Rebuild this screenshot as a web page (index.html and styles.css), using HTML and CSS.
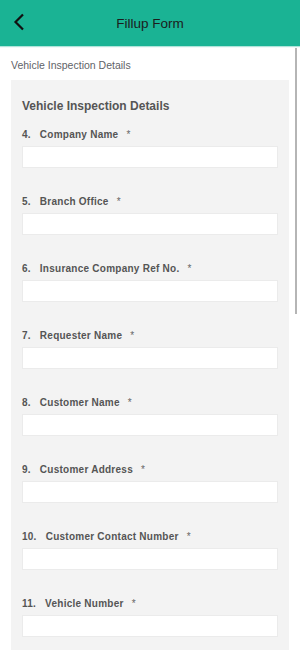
FILE: index.html
```html
<!DOCTYPE html>
<html lang="en">
  <head>
    <meta charset="UTF-8" />
    <meta name="viewport" content="width=device-width, initial-scale=1.0" />
    <title>Fillup Form</title>
    <link rel="stylesheet" href="styles.css">
  </head>
  <body>
    <header class="top-bar">
      <span class="back-btn">
        <svg width="12" height="18" viewBox="0 0 12 18">
          <path d="M10 1.5 L2.5 9 L10 16.5" fill="none" stroke="#111" stroke-width="2.2" />
        </svg>
      </span>
      <h1 class="title">Fillup Form</h1>
    </header>

    <main class="content">
      <p class="section-name">Vehicle Inspection Details</p>

      <div class="form-card">
        <h2>Vehicle Inspection Details</h2>

        <div class="field">
          <label><span class="num">4.</span>Company Name<span class="req">*</span></label>
          <input type="text" />
        </div>
        <div class="field">
          <label><span class="num">5.</span>Branch Office<span class="req">*</span></label>
          <input type="text" />
        </div>
        <div class="field">
          <label><span class="num">6.</span>Insurance Company Ref No.<span class="req">*</span></label>
          <input type="text" />
        </div>
        <div class="field">
          <label><span class="num">7.</span>Requester Name<span class="req">*</span></label>
          <input type="text" />
        </div>
        <div class="field">
          <label><span class="num">8.</span>Customer Name<span class="req">*</span></label>
          <input type="text" />
        </div>
        <div class="field">
          <label><span class="num">9.</span>Customer Address<span class="req">*</span></label>
          <input type="text" />
        </div>
        <div class="field">
          <label><span class="num">10.</span>Customer Contact Number<span class="req">*</span></label>
          <input type="text" />
        </div>
        <div class="field">
          <label><span class="num">11.</span>Vehicle Number<span class="req">*</span></label>
          <input type="text" />
        </div>
      </div>

      <div class="scroll-thumb"></div>
    </main>
  </body>
</html>
```

FILE: styles.css
```css
body {
  margin: 0;
  width: 300px;
  height: 650px;
  overflow: hidden;
  font-family: "Liberation Sans", Arial, sans-serif;
  background: #fff;
}

.top-bar {
  height: 46px;
  background-color: #1ab394;
  display: flex;
  align-items: center;
  justify-content: center;
  position: relative;
  box-shadow: 0 1px 1px rgba(26, 179, 148, 0.35);
}

.back-btn {
  position: absolute;
  left: 13px;
  top: 13px;
  display: flex;
}

.title {
  margin: 0;
  font-size: 13.5px;
  font-weight: normal;
  color: #1c1c1c;
}

.content {
  position: relative;
  height: 604px;
  overflow: hidden;
  padding: 0 11px;
}

.section-name {
  margin: 0;
  padding: 13px 0 8px;
  font-size: 10.5px;
  line-height: 13px;
  color: #5f6368;
}

.form-card {
  background-color: #f3f3f3;
  padding: 18px 11px 20px;
}

.form-card h2 {
  margin: 0 0 14px;
  font-size: 12px;
  line-height: 16px;
  color: #555;
}

.field {
  margin-bottom: 27px;
}

.field label {
  display: block;
  padding-top: 1px;
  font-size: 10px;
  line-height: 12px;
  font-weight: bold;
  letter-spacing: 0.25px;
  color: #555;
  margin-bottom: 5px;
}

.num {
  margin-right: 9px;
}

.req {
  margin-left: 8px;
  font-weight: normal;
  color: #666;
}

.field input {
  display: block;
  box-sizing: border-box;
  width: 100%;
  height: 22px;
  margin: 0;
  border: 1px solid #ebebeb;
  background: #fff;
  outline: none;
}

.scroll-thumb {
  position: absolute;
  right: 3px;
  top: 2px;
  width: 2px;
  height: 266px;
  background-color: #b5b5b5;
}
```
